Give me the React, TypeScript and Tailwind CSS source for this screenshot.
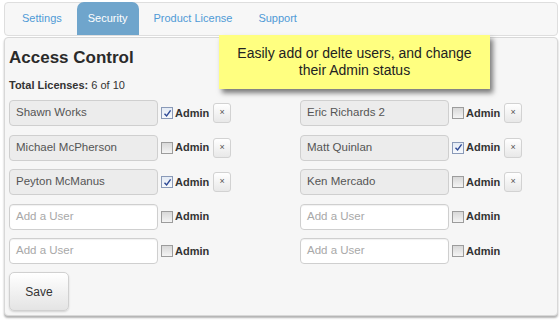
import React from 'react';

type User = { name: string; admin: boolean } | null;

const left: User[] = [
  { name: 'Shawn Works', admin: true },
  { name: 'Michael McPherson', admin: false },
  { name: 'Peyton McManus', admin: true },
  null,
  null,
];

const right: User[] = [
  { name: 'Eric Richards 2', admin: false },
  { name: 'Matt Quinlan', admin: true },
  { name: 'Ken Mercado', admin: false },
  null,
  null,
];

function Check({ on }: { on: boolean }) {
  return (
    <span
      className={
        'relative flex h-[12px] w-[12px] items-center justify-center border ' +
        (on
          ? 'border-[#8a9ab8] bg-gradient-to-b from-[#e4ebf5] to-[#f7f9fc]'
          : 'border-[#9c9c9c] bg-gradient-to-b from-[#d8d8d8] to-[#f4f4f4]')
      }
    >
      {on && (
        <svg width="9" height="9" viewBox="0 0 9 9">
          <path d="M1.5 4.8 L3.6 7 L7.6 1.4" fill="none" stroke="#2f4a96" strokeWidth="1.4" />
        </svg>
      )}
    </span>
  );
}

function Row({ user }: { user: User }) {
  return (
    <div className="flex h-[26px] items-center">
      {user ? (
        <div className="flex h-[26px] w-[149px] items-center rounded-[4px] border border-[#cfcfcf] bg-[#ececec] pl-[6px] text-[11.5px] text-[#555]">
          {user.name}
        </div>
      ) : (
        <div className="flex h-[26px] w-[149px] items-center rounded-[4px] border border-[#cfcfcf] bg-white pl-[6px] text-[11.5px] text-[#a8a8a8] shadow-[inset_0_1px_1px_rgba(0,0,0,0.06)]">
          Add a User
        </div>
      )}
      <span className="ml-[3px]">
        <Check on={!!user && user.admin} />
      </span>
      <span className="ml-[2px] text-[11px] font-bold text-[#333]">Admin</span>
      {user && (
        <span className="ml-[4px] flex h-[20px] w-[18px] items-center justify-center rounded-[3px] border border-[#d2d2d2] bg-gradient-to-b from-white to-[#e8e8e8] text-[9px] text-[#555]">
          ×
        </span>
      )}
    </div>
  );
}

export default function App() {
  return (
    <div className="relative h-[320px] w-[560px] bg-white font-['Liberation_Sans',Arial,sans-serif] text-[#333]">
      {/* tabs */}
      <div className="ml-[4px] mr-[2px] mt-[2px] flex h-[34px] items-end gap-[4px] rounded-[4px] border border-[#dedede] bg-[#f7f7f7] pl-[6px] text-[11px]">
        <span className="flex h-[33px] items-center px-[11px] text-[#4f9ad6]">Settings</span>
        <span className="flex h-[33px] items-center rounded-t-[7px] bg-[#6fa5cc] px-[11px] text-white">Security</span>
        <span className="flex h-[33px] items-center px-[11px] text-[#4f9ad6]">Product License</span>
        <span className="flex h-[33px] items-center px-[11px] text-[#4f9ad6]">Support</span>
      </div>

      {/* panel */}
      <div className="ml-[4px] mr-[2px] mt-[1px] h-[279px] rounded-[4px] border border-[#d8d8d8] bg-[#f6f6f6] px-[4px] pt-[10px] shadow-[0_2px_2px_rgba(0,0,0,0.3)]">
        <h2 className="text-[17px] font-bold leading-[20px] text-[#2a2a2a]">Access Control</h2>
        <div className="mt-[10px] text-[11px] leading-[14px]">
          <span className="font-bold">Total Licenses:</span> 6 of 10
        </div>
        <div className="mt-[8px] grid grid-cols-[291px_1fr]">
          <div className="flex flex-col gap-[8.5px]">
            {left.map((u, i) => (
              <Row key={i} user={u} />
            ))}
          </div>
          <div className="flex flex-col gap-[8.5px]">
            {right.map((u, i) => (
              <Row key={i} user={u} />
            ))}
          </div>
        </div>
        <button className="mt-[8px] flex h-[39px] w-[60px] items-center justify-center rounded-[5px] border border-[#d0d0d0] bg-gradient-to-b from-white to-[#e4e4e4] text-[12px] text-[#333] shadow-[0_1px_2px_rgba(0,0,0,0.15)]">
          Save
        </button>
      </div>

      {/* callout */}
      <div className="absolute left-[219px] top-[33px] flex h-[54px] w-[271px] flex-col items-center justify-center bg-[#ffff80] text-center text-[14px] leading-[17px] text-[#222] shadow-[3px_4px_5px_rgba(0,0,0,0.5)]">
        <div>Easily add or delte users, and change</div>
        <div>their Admin status</div>
      </div>
    </div>
  );
}
